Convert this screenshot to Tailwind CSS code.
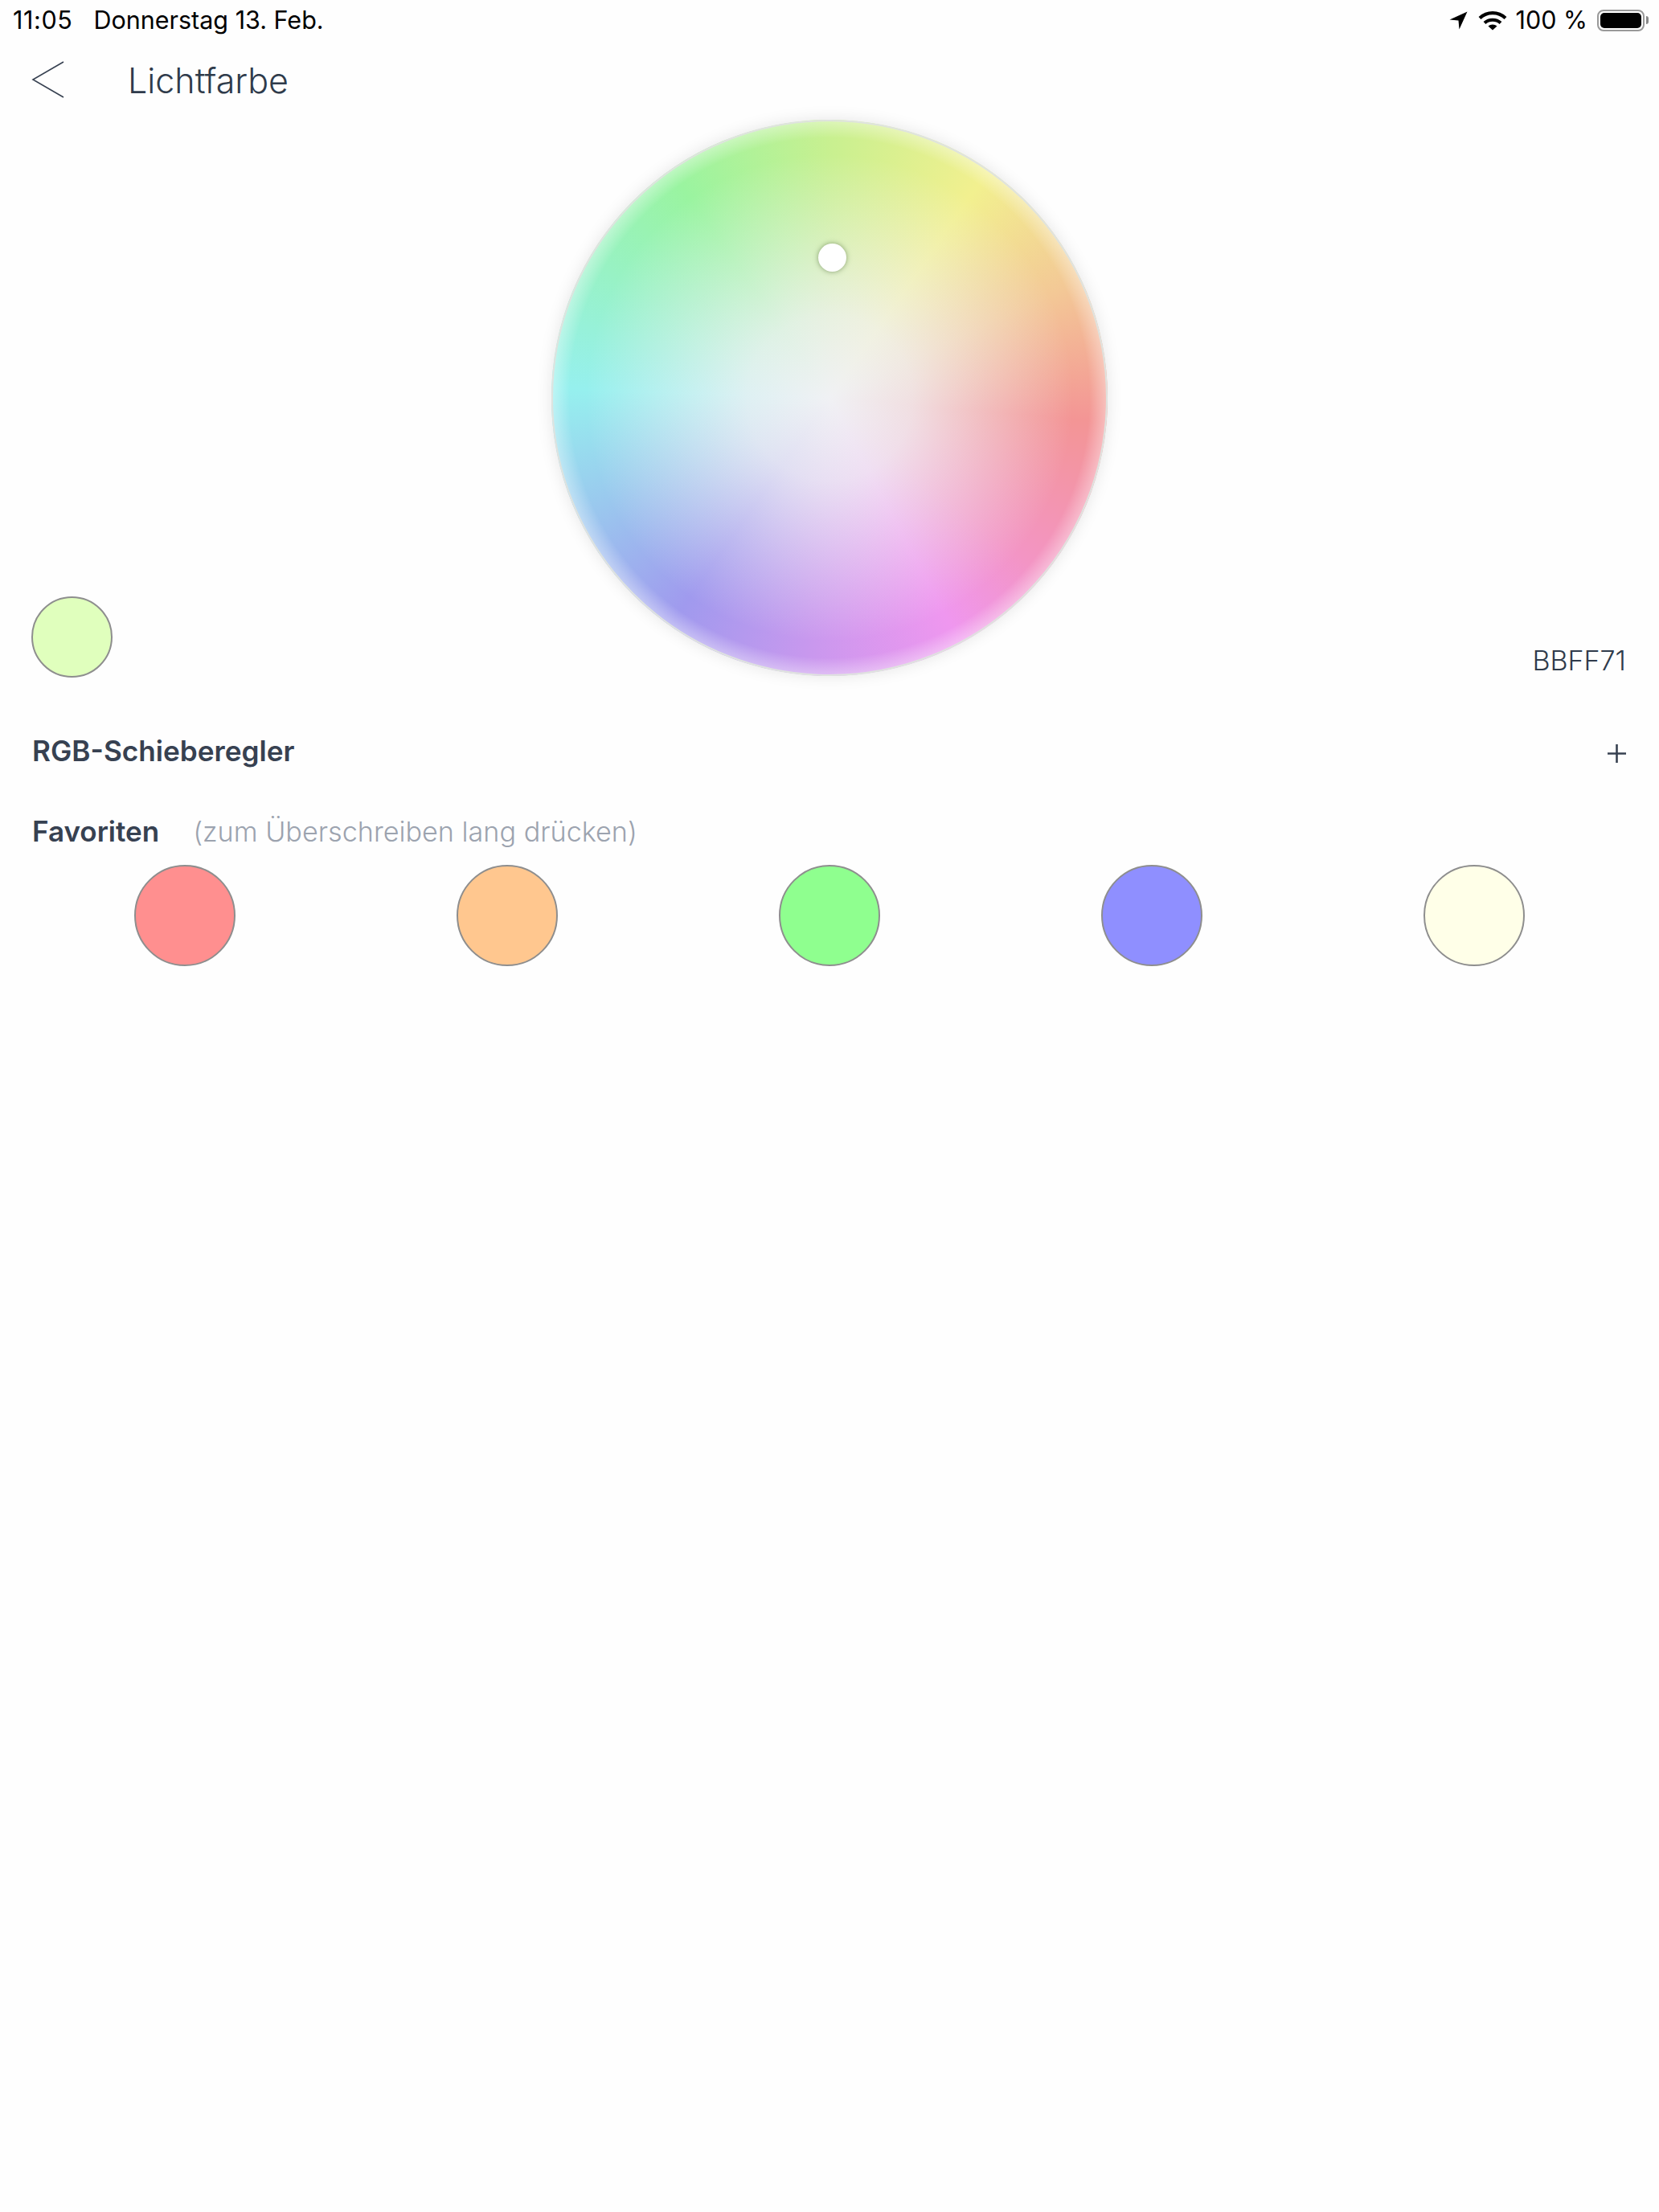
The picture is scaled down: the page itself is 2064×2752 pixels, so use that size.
<!DOCTYPE html>
<html lang="de">
<head>
  <meta charset="UTF-8" />
  <title>Lichtfarbe</title>
  <script src="https://cdn.jsdelivr.net/npm/@tailwindcss/browser@4"></script>
</head>
<body class="bg-[#fefefe]">
  <div class="w-[2064px] h-[2752px] overflow-hidden font-['Inter',sans-serif] text-[#374151]">

    <!-- status bar -->
    <div class="h-[50px] pl-[16px] pr-[13px] flex items-center justify-between text-black text-[30.5px] leading-[50px]">
      <div class="flex gap-[26px]">
        <span class="tracking-[0.6px]">11:05</span>
        <span>Donnerstag 13. Feb.</span>
      </div>
      <div class="flex items-center">
        <svg class="w-[23px] h-[23px]" viewBox="0 0 23 23"><path d="M22.5 0.5 L0.5 10.5 L11.5 11.5 L12.5 22.5 Z" fill="#000"/></svg>
        <svg class="ml-[13px] w-[36px] h-[25px]" viewBox="0 0 36 25" fill="none" stroke="#000" stroke-width="4.2">
          <path d="M2 9.5 C11 1 25 1 34 9.5"/>
          <path d="M8 15.5 C13.5 10.5 22.5 10.5 28 15.5"/>
          <path d="M18 24.5 L12.5 19.5 C15.5 16.8 20.5 16.8 23.5 19.5 Z" fill="#000" stroke="none"/>
        </svg>
        <span class="ml-[11px]">100 %</span>
        <div class="ml-[12px] w-[59px] h-[27px] rounded-[8px] border-2 border-[#999] p-[2px]">
          <div class="w-full h-full rounded-[5px] bg-black"></div>
        </div>
        <div class="ml-[2px] w-[3px] h-[10px] rounded-r-[3px] bg-[#888]"></div>
      </div>
    </div>

    <!-- header -->
    <div class="h-[99px] flex items-center pb-[2px]">
      <svg class="ml-[39px] w-[41px] h-[46px]" viewBox="0 0 41 46" fill="none" stroke="#374151" stroke-width="1.6"><path d="M40 1 L2 23 L40 45"/></svg>
      <h1 class="ml-[79px] mt-[3px] text-[43px] font-light text-[#2f3b4b]">Lichtfarbe</h1>
    </div>

    <!-- colour wheel with current colour and hex value -->
    <div class="grid grid-cols-[1fr_692px_1fr] items-end">
      <div class="pl-[39px] -mb-[2px]">
        <div class="w-[101px] h-[101px] rounded-full bg-[#e0ffbd] border-2 border-[#8e8e8e]"></div>
      </div>
      <div class="relative w-[692px] h-[692px] rounded-full shadow-[0_0_20px_rgba(0,0,0,0.1)] bg-[conic-gradient(from_0deg,#c8f090_0deg,#f2f08f_35deg,#f3c896_65deg,#f39595_95deg,#f395c5_130deg,#ef97ef_152deg,#c898ee_185deg,#a09aee_215deg,#9ac8ee_245deg,#96f0ee_272deg,#98f2c4_300deg,#9af4a0_325deg,#c8f090_360deg)]">
        <div class="absolute inset-0 rounded-full border-2 border-[#dfe3df] bg-[radial-gradient(closest-side,#f0f1f4_0%,rgba(240,241,244,0.8)_30%,rgba(240,241,244,0)_88%,rgba(255,255,255,0)_94%,rgba(255,255,255,0.36)_100%)]"></div>
        <div class="absolute left-[332px] top-[154px] w-[35px] h-[35px] rounded-full bg-white shadow-[0_0_6px_rgba(60,90,40,0.55)]"></div>
      </div>
      <div class="pr-[41px] text-right text-[34px] font-light leading-[36px] -mb-[2px] pb-[3px] text-[#2f3b4b]">BBFF71</div>
    </div>

    <!-- rgb sliders -->
    <div class="mt-[68px] pl-[40px] pr-[41px] flex items-center justify-between h-[50px]">
      <span class="text-[35.2px] font-semibold">RGB-Schieberegler</span>
      <svg class="mt-[6px] w-[23px] h-[23px]" viewBox="0 0 23 23" stroke="#374151" stroke-width="2.6"><path d="M0 11.5 H23 M11.5 0 V23"/></svg>
    </div>

    <!-- favourites -->
    <div class="mt-[50px] pl-[40px] flex items-baseline h-[50px] leading-[50px]">
      <span class="text-[35px] font-semibold">Favoriten</span>
      <span class="ml-[42px] text-[34.2px] font-light text-[#9ca3af]">(zum Überschreiben lang drücken)</span>
    </div>
    <div class="mt-[17px] pl-[167px] flex gap-[275px]">
      <div class="shrink-0 w-[126px] h-[126px] rounded-full bg-[#ff8f8f] border-2 border-[#8e8e8e]"></div>
      <div class="shrink-0 w-[126px] h-[126px] rounded-full bg-[#ffc78f] border-2 border-[#8e8e8e]"></div>
      <div class="shrink-0 w-[126px] h-[126px] rounded-full bg-[#8fff8f] border-2 border-[#8e8e8e]"></div>
      <div class="shrink-0 w-[126px] h-[126px] rounded-full bg-[#8f8fff] border-2 border-[#8e8e8e]"></div>
      <div class="shrink-0 w-[126px] h-[126px] rounded-full bg-[#ffffe8] border-2 border-[#8e8e8e]"></div>
    </div>
  </div>
</body>
</html>
